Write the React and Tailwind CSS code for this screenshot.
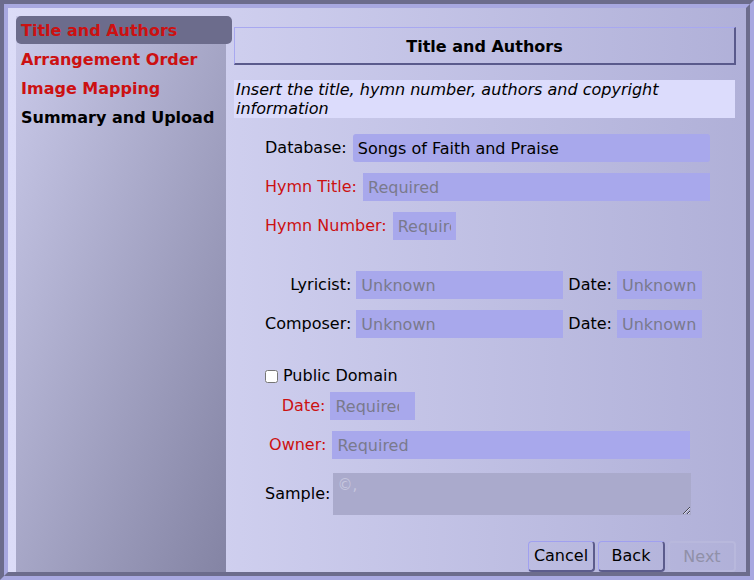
const steps = [
  { label: 'Title and Authors', active: true, done: false },
  { label: 'Arrangement Order', active: false, done: false },
  { label: 'Image Mapping', active: false, done: false },
  { label: 'Summary and Upload', active: false, done: true },
];

const inputCls =
  'h-[28px] bg-[#a8a8ec] px-[5px] text-[16px] text-black outline-none placeholder:text-[#7a7a8c]';

const App = () => {
  return (
    <div className="w-[754px] h-[580px] font-['DejaVu_Sans',sans-serif] text-[16px] text-black border-4 border-t-[#6c6c8c] border-l-[#6c6c8c] border-b-[#a8a8e0] border-r-[#a8a8e0]">
      <div className="h-full border-4 border-t-[#a8a8e0] border-l-[#a8a8e0] border-b-[#6c6c8c] border-r-[#6c6c8c]">
        <div className="flex h-full bg-linear-to-r from-[#dcdcf8] to-[#b0b0d8]">
          {/* Sidebar */}
          <div className="pt-2 pl-2 flex relative z-10">
            <nav className="w-[210px] h-full bg-linear-to-br from-[#cacaea] to-[#8484a4] flex flex-col gap-px">
              {steps.map((s) => (
                <div
                  key={s.label}
                  className={
                    s.active
                      ? 'w-[216px] h-[28px] flex items-center px-[5px] pt-[2px] rounded-[5px] bg-[#6c6c8c] font-bold text-[#cc1111]'
                      : s.done
                      ? 'h-[28px] flex items-center px-[5px] pt-[2px] font-bold text-black'
                      : 'h-[28px] flex items-center px-[5px] pt-[2px] font-bold text-[#cc1111]'
                  }
                >
                  {s.label}
                </div>
              ))}
            </nav>
          </div>

          {/* Main panel */}
          <main className="flex-1 flex flex-col pl-2 pr-[10px] pt-[19px]">
            <div className="h-[38px] flex items-center justify-center pt-[2px] border-t border-l border-t-[#a8a8f0] border-l-[#a8a8f0] border-r-2 border-b-2 border-r-[#5a5a8c] border-b-[#5a5a8c] font-bold">
              Title and Authors
            </div>

            <p className="mt-[15px] bg-[#dcdcfc] px-[2px] italic text-[16px] leading-[19px] mr-px">
              Insert the title, hymn number, authors and copyright information
            </p>

            <div className="ml-[31px] mr-[26px] mt-[16px] flex flex-col">
              <div className="flex items-center gap-[6px]">
                <span>Database:</span>
                <input className={inputCls + ' flex-1 rounded-[3px]'} defaultValue="Songs of Faith and Praise" />
              </div>
              <div className="flex items-center gap-[6px] mt-[11px]">
                <span className="text-[#cc1111]">Hymn Title:</span>
                <input className={inputCls + ' flex-1'} placeholder="Required" />
              </div>
              <div className="flex items-center gap-[6px] mt-[11px]">
                <span className="text-[#cc1111]">Hymn Number:</span>
                <input className={inputCls + ' w-[63px]'} placeholder="Required" />
              </div>

              <div className="grid grid-cols-[auto_207px_auto_85px] gap-x-[5px] gap-y-[11px] items-center mt-[31px] w-fit">
                <span className="text-right">Lyricist:</span>
                <input className={inputCls + ' w-full'} placeholder="Unknown" />
                <span>Date:</span>
                <input className={inputCls + ' w-full'} placeholder="Unknown" />
                <span className="text-right">Composer:</span>
                <input className={inputCls + ' w-full'} placeholder="Unknown" />
                <span>Date:</span>
                <input className={inputCls + ' w-full'} placeholder="Unknown" />
              </div>

              <label className="flex items-center gap-[5px] mt-[28px] h-[20px]">
                <input type="checkbox" className="w-[13px] h-[13px] m-0" />
                <span>Public Domain</span>
              </label>

              <div className="grid grid-cols-[auto_1fr] gap-x-[3px] items-center mt-[6px] mr-[19px]">
                <span className="text-right text-[#cc1111] pr-[5px]">Date:</span>
                <input className={inputCls + ' w-[85px] pr-[16px] -ml-[3px]'} placeholder="Required" />
                <span className="text-right text-[#cc1111] mt-[11px] pr-[4px]">Owner:</span>
                <input className={inputCls + ' w-full mt-[11px] -ml-px'} placeholder="Required" />
                <span className="text-right mt-[14px]">Sample:</span>
                <textarea
                  disabled
                  className="mt-[14px] h-[42px] w-full bg-[#aaaacc] px-[4px] py-[1px] text-[15px] placeholder:text-[#c6c6de]"
                  placeholder="©,"
                />
              </div>
            </div>

            <div className="flex justify-end gap-[3px] mt-auto">
              <button className="w-[67px] h-[31px] rounded-[4px] border-t border-l border-t-[#a0a0f0] border-l-[#a0a0f0] border-r-2 border-b-2 border-r-[#5c5c8c] border-b-[#5c5c8c] text-black">
                Cancel
              </button>
              <button className="w-[67px] h-[31px] rounded-[4px] border-t border-l border-t-[#a0a0f0] border-l-[#a0a0f0] border-r-2 border-b-2 border-r-[#5c5c8c] border-b-[#5c5c8c] text-black">
                Back
              </button>
              <button disabled className="w-[68px] h-[31px] rounded-[4px] border-2 border-[#b8b8dc] text-[#9090a8]">
                Next
              </button>
            </div>
          </main>
        </div>
      </div>
    </div>
  );
};

export default App;
